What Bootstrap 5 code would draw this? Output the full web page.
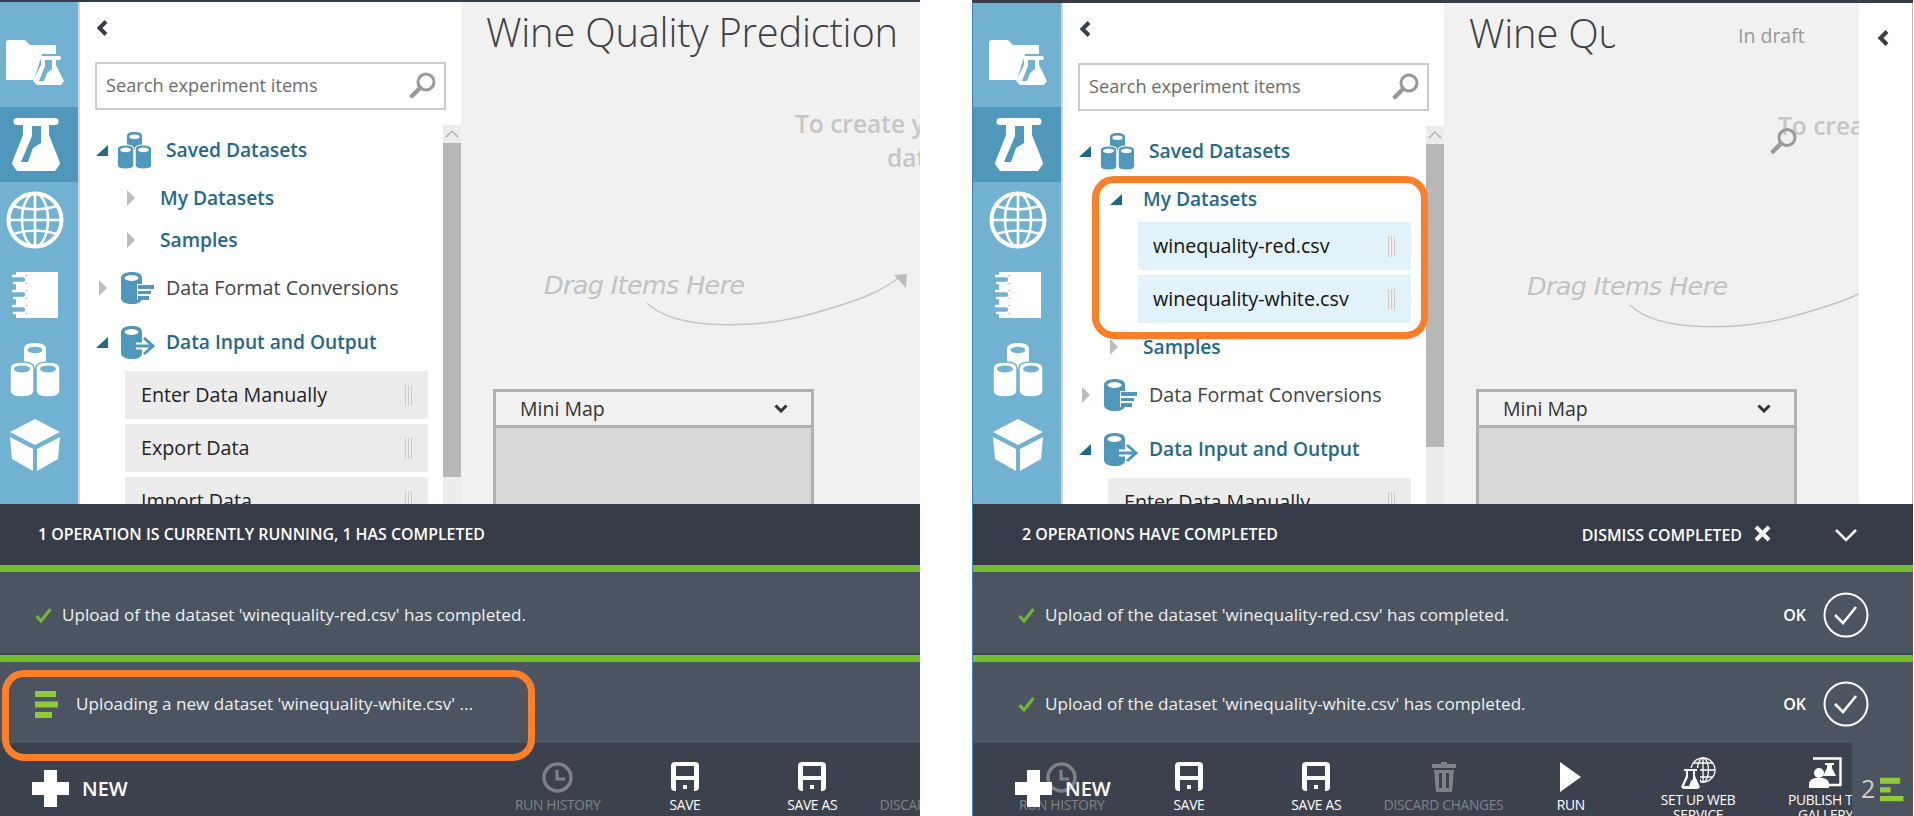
<!DOCTYPE html>
<html lang="en">
<head>
<meta charset="utf-8">
<title>Wine Quality Prediction</title>
<link rel="stylesheet" href="https://cdn.jsdelivr.net/npm/bootstrap@5.3.0/dist/css/bootstrap.min.css">
<style>
html,body{height:816px;overflow:hidden}
body{background:#fff;font-family:"Open Sans","Noto Sans",sans-serif;color:#222;width:1914px}
.ui-pane{height:816px;position:relative;overflow:hidden;flex:none;background:#fff}
.pane-a{width:930px;margin-left:-10px;border-top:2px solid #373d48}
.pane-b{width:941px;margin-left:52px;border-top:3px solid #373d48;border-left:1px solid #3f88c5}
.work{flex:1 1 0;min-height:0;overflow:hidden}
.rail{width:90px;flex:none;background:#71b1d1;border-right:2px solid #cdd6db;color:#fff;--hole:#71b1d1;overflow:hidden}
.rail-item{height:75px;flex:none;padding-left:2px}
.rail-first{height:105px;padding-bottom:22px}
.pane-b .rail-first{height:104px}
.rail-item.is-on{background:#5098bb;--hole:#5098bb;margin-right:-2px;position:relative}
.palette{width:381px;flex:none;padding:0 0 0 15px;background:#fff;overflow:hidden}
.back{height:60px;flex:none;padding:0 0 8px 1px}
.searchbox{width:351px;height:48px;border:2px solid #ccc;flex:none;position:relative}
.searchbox .form-control{border:0;border-radius:0;height:44px;padding:0 40px 2px 9px;font-size:18.2px;color:#666;background:transparent;box-shadow:none}
.searchbox .form-control::placeholder{color:#6d6d6d;opacity:1}
.searchbox svg{position:absolute;right:8px;top:8px}
.treewrap{margin-top:13px;flex:1 1 0;min-height:0;overflow:hidden}
.tree{width:333px;flex:none;--hole:#fff;color:#4f97bc}
.row-top{height:54px;flex:none}
.row-sub{height:42px;flex:none;padding-left:32px}
.col-tw{width:22px;flex:none;padding-left:1px}
.row-sub .col-tw{width:33px;padding-left:0}
.col-ic{width:49px;flex:none}
.t-node{font-size:19.7px;color:#444;white-space:nowrap}
.t-open{color:#1d6a8e;font-weight:600;font-size:19.2px}
.items{margin:2px 0 0 30px;width:303px;gap:5px;border-radius:0;flex:none}
.items.nested{margin-left:60px;width:273px}
.items .list-group-item{height:48px;flex:none;border:0;border-radius:0;background:#ececec;color:#222;font-size:19.7px;padding:0 15px 0 16px;margin:0;white-space:nowrap}
.items.nested .list-group-item{background:#e1f2fa;padding-left:15px;color:#111}
.after-nest{margin-top:3px}
.grip{width:8px;height:21px;flex:none;background:repeating-linear-gradient(90deg,#ccc 0 1px,#eee 1px 3px)}
.scrolly{width:18px;flex:none;margin-top:2px;background:#ececec}
.scrolly svg{display:block;margin:5px auto 0}
.sc-btn{height:18px;flex:none}
.thumb{background:#b7b7b7;flex:none}
.thumb-a{height:334px}
.thumb-b{height:303px}
.stage{flex:1 1 0;min-width:0;background:#f1f1f1;position:relative;overflow:hidden}
.wtitle{font-size:39.8px;font-weight:300;color:#3d3f44;white-space:nowrap;line-height:1;margin:10px 0 0 25px;letter-spacing:-.2px}
.wtitle-cut{width:146px;overflow:hidden;padding-bottom:6px}
.draft{position:absolute;left:294px;top:18px;font-size:19.5px;color:#999;white-space:nowrap}
.hint{position:absolute;left:334px;top:105px;font-size:24.5px;line-height:34px;font-weight:600;color:#c6c6c6;white-space:nowrap}
.hint span{display:block}
.hint span+span{margin-left:92px}
.pane-b .hint{top:106px}
.dragit{position:absolute;left:83px;top:266px;font-family:"DejaVu Sans",sans-serif;font-style:italic;font-size:24px;font-weight:300;color:#c2c2c2;white-space:nowrap;letter-spacing:-.6px;transform:scaleX(1.06);transform-origin:left}
.pane-b .dragit{top:266px}
.swoosh{position:absolute;left:0;top:0}
.pane-b .swoosh{top:1px}
.minimap{position:absolute;left:32px;top:387px;bottom:-10px;width:321px;border:3px solid #b0b0b0}
.pane-b .minimap{top:386px}
.mm-head{height:33px;flex:none;border-bottom:3px solid #b0b0b0;padding:0 23px 0 24px;font-size:19.5px;color:#333;box-sizing:content-box}
.mm-body{flex:1;background:#d8d8d8}
.finder{position:absolute;left:326px;top:124px}
.sideback{width:54px;flex:none;background:#fff;padding:21px 0 0 18px;border-right:1px solid #bbb}
.tray{height:312px;flex:none;background:#363c47;color:#fff;position:relative}
.tray-head{height:61px;padding:0 55px 0 49px;font-size:15.9px;font-weight:600;white-space:nowrap;flex:none}
.pane-a .tray-head{padding-left:48px}
.dismiss{margin-left:auto;font-size:15.9px;font-weight:600;margin-top:2px;color:#fff}
.dismiss svg{margin:-4px 63px 0 12px}
.op{height:90px;flex:none;border-top:7px solid #73bd2e;background:#4a5561;box-shadow:inset 0 -2px 0 #3c4550;padding:3px 44px 0 45px;font-size:17.1px;color:#eef0f2;white-space:nowrap}
.op + .op{box-shadow:none;height:88px}
.op .ic{flex:none;width:27px}
.op .ic-run{width:41px}
.okpart{margin-left:auto;color:#fff;font-weight:600;font-size:16px;gap:17px}
.tools{height:73px;flex:none;background:#3c424d;position:relative;overflow:hidden}
.tool-row{flex:1 1 0;min-width:0;overflow:hidden;padding-left:504px}
.pane-b .tool-row{padding-left:25px}
.tool{width:127.3px;flex:none;padding:14px 0 0;text-align:center;font-size:13.8px;line-height:15px;color:#fff;border:0;border-radius:0;letter-spacing:-.3px}
.tool.btn:disabled,.tool.is-off{color:#7d8289;opacity:1}
.tool .glyph{height:31px;margin-bottom:4px}
.tool span{display:block;white-space:nowrap}
.addnew{position:absolute;left:42px;top:27px;gap:13px;font-size:20px;font-weight:600;color:#fff;line-height:1;padding:0;border:0}
.bell{width:61px;flex:none;background:#4a5561;padding:33px 9px 0 9px;color:#ccc;font-size:25px;line-height:1;gap:5px}
.callout{position:absolute;border:7px solid #ff7f27;border-radius:22px;pointer-events:none}
.callout-run{left:12px;top:668px;width:533px;height:91px}
.callout-tree{left:119px;top:173px;width:336px;height:163px}
.defs{position:absolute;width:0;height:0}
</style>
</head>
<body class="d-flex">
<svg class="defs" aria-hidden="true">
  <symbol id="i-flask" viewBox="0 0 48 53"><path fill="currentColor" fill-rule="evenodd" d="M5 0H43a3.500 3.500 0 0 1 0 7H37V17L47 42L48 46L43 53H5L0 46L1 42L11 17V7H5a3.500 3.500 0 0 1 0-7ZM20 8V18L9 44H16L21 30L29 25V8Z"/></symbol>
  <symbol id="i-folder" viewBox="0 0 58 45"><path fill="currentColor" d="M0 3Q0 0 3 0H19L24 5H50V14H36L28 40H0Z"/><path fill="currentColor" fill-rule="evenodd" d="M36 16H53a2 2 0 0 1 0 4H50V25L58 41L55 45H31L27 41L35 25V20H36a2 2 0 0 1 0-4ZM39 20V26L33 41H38L41 33L46 29V20Z"/></symbol>
  <symbol id="i-globe" viewBox="0 0 58 58"><g fill="none" stroke="currentColor"><circle cx="29" cy="29" r="26.500" stroke-width="4"/><ellipse cx="29" cy="29" rx="13" ry="26.500" stroke-width="2.600"/><path stroke-width="2.600" d="M29 3V55M3 29H55M7 15Q29 22 51 15M7 43Q29 36 51 43"/></g></symbol>
  <symbol id="i-book" viewBox="0 0 46 46"><path fill="currentColor" d="M4 0H46V46H4Z"/><path fill="var(--hole)" d="M0 3H15V12H0ZM0 18H15V27H0ZM0 33H15V42H0Z"/><path fill="none" stroke="currentColor" stroke-width="2.600" stroke-linecap="round" d="M1 4H11Q14.500 4 14.500 7.500T11 11H2M1 19H11Q14.500 19 14.500 22.500T11 26H2M1 34H11Q14.500 34 14.500 37.500T11 41H2"/></symbol>
  <symbol id="i-stack" viewBox="0 0 50 54"><path fill="currentColor" d="M13 0C20 0 24 2 24 6V20C24 24 20 26 13 26S2 24 2 20V6C2 2 6 0 13 0Z" transform="translate(12 0)"/><ellipse fill="var(--hole)" cx="25" cy="7" rx="7.500" ry="3.200"/><path fill="currentColor" stroke="var(--hole)" stroke-width="1.500" d="M12 19C19 19 24 21 24 25V48C24 52 19 54 12 54S0 52 0 48V25C0 21 5 19 12 19Z"/><ellipse fill="var(--hole)" cx="12" cy="26" rx="8" ry="3.400"/><path fill="currentColor" stroke="var(--hole)" stroke-width="1.500" d="M38 19C45 19 50 21 50 25V48C50 52 45 54 38 54S26 52 26 48V25C26 21 31 19 38 19Z"/><ellipse fill="var(--hole)" cx="38" cy="26" rx="8" ry="3.400"/></symbol>
  <symbol id="i-cube" viewBox="0 0 50 52"><path fill="currentColor" d="M25 0L50 13L25 26L0 13ZM0 18L23 30V52L2 40ZM50 18L27 30V52L48 40Z"/></symbol>
  <symbol id="i-puzzle" viewBox="0 0 25 10"><path fill="currentColor" d="M0 10V5H2Q2 1 6 1T9 5H14Q14 0 19 0T24 5H25V10Z"/></symbol>
  <symbol id="i-can-fmt" viewBox="0 0 33 32"><path fill="currentColor" d="M11 0C17 0 21 2 21 6V26C21 30 17 32 11 32S0 30 0 26V6C0 2 5 0 11 0Z"/><ellipse fill="#fff" cx="10.500" cy="6" rx="7" ry="3"/><path fill="#fff" d="M16 12H33V28H16Z"/><path fill="currentColor" d="M17 13H33V17H17ZM17 19H30V22H17ZM17 24H28V28H17Z"/></symbol>
  <symbol id="i-can-io" viewBox="0 0 35 33"><path fill="currentColor" d="M11 0C17 0 21 2 21 6V27C21 31 17 33 11 33S0 31 0 27V6C0 2 5 0 11 0Z"/><ellipse fill="#fff" cx="10.500" cy="6" rx="7" ry="3"/><path fill="none" stroke="#fff" stroke-width="7" d="M15 20H30M23 12L32 20L23 28"/><path fill="none" stroke="currentColor" stroke-width="3" d="M15 20H31M23 12L32 20L23 28"/></symbol>
  <symbol id="i-mag" viewBox="0 0 27 27"><g fill="none" stroke="currentColor"><circle cx="17" cy="10" r="8" stroke-width="3"/><path stroke-width="4.500" stroke-linecap="round" d="M11 16L3 24"/></g></symbol>
  <symbol id="i-save" viewBox="0 0 28 29"><path fill="currentColor" fill-rule="evenodd" d="M4 0H24Q28 0 28 4V25Q28 29 24 29H4Q0 29 0 25V4Q0 0 4 0ZM5 4V14H23V4ZM5 18V29H23V18Z"/><path fill="currentColor" d="M12 23H16V27H12Z"/></symbol>
  <symbol id="i-clock" viewBox="0 0 31 31"><g fill="none" stroke="currentColor"><circle cx="15.500" cy="15.500" r="13.500" stroke-width="3.400"/><path stroke-width="3" d="M15 8V17H23"/></g></symbol>
  <symbol id="i-trash" viewBox="0 0 24 30"><path fill="currentColor" fill-rule="evenodd" d="M9 0H15V2H24V6H0V2H9ZM2 8H22L20 30H4ZM7 11V26H10V11ZM14 11V26H17V11Z"/></symbol>
  <symbol id="i-run" viewBox="0 0 21 30"><path fill="currentColor" d="M0 0L21 15L0 30Z"/></symbol>
  <symbol id="i-web" viewBox="0 0 36 32"><g fill="none" stroke="currentColor" stroke-width="1.300"><circle cx="23" cy="13" r="12"/><ellipse cx="23" cy="13" rx="5.500" ry="12"/><path d="M23 1V25M11 13H35M13 6H33M13 20H33"/></g><path fill="#3c424d" d="M0 11H20V32H0Z"/><path fill="currentColor" fill-rule="evenodd" d="M4 12H17V14H15V19L20 30L18 32H3L1 30L6 19V14H4ZM8 14V20L4 29H9L11 24L13 22V14Z"/></symbol>
  <symbol id="i-pub" viewBox="0 0 33 31"><path fill="none" stroke="currentColor" stroke-width="2.400" d="M4 1.500H31.500V28H20"/><path fill="currentColor" d="M16 6H25V8H23V11L27 19H14L18 11V8H16Z"/><circle cx="10" cy="16" r="5" fill="currentColor"/><path fill="currentColor" d="M0 31V26Q1 22 6 21H14Q19 22 20 26V31Z"/></symbol>
  <symbol id="i-plus" viewBox="0 0 37 37"><path fill="currentColor" d="M12 0H25V12H37V25H25V37H12V25H0V12H12Z"/></symbol>
  <symbol id="i-tick" viewBox="0 0 17 15"><path fill="none" stroke="#70b82f" stroke-width="3.200" d="M1.500 8L6 13L15.500 1"/></symbol>
  <symbol id="i-busy" viewBox="0 0 23 27"><path fill="#8fcb38" d="M0 0H21V6H0ZM0 10.500H23V16.500H0ZM0 21H17V27H0Z"/></symbol>
  <symbol id="i-bell" viewBox="0 0 27 27"><path fill="#8fcb38" d="M0 0H23V7H0ZM0 11H12V17H0ZM0 21H27V27H0Z"/></symbol>
  <symbol id="i-okc" viewBox="0 0 46 46"><circle cx="23" cy="23" r="21.500" fill="none" stroke="#fff" stroke-width="2"/><path fill="none" stroke="#fff" stroke-width="2.600" d="M12 23L20 31L33 15"/></symbol>
  <symbol id="i-open" viewBox="0 0 12 11"><path fill="#1d6a8e" d="M12 0V11H0Z"/></symbol>
  <symbol id="i-shut" viewBox="0 0 8 16"><path fill="#bdbdbd" d="M0 0L8 8L0 16Z"/></symbol>
  <symbol id="i-back" viewBox="0 0 12 16"><path fill="none" stroke="#3a3f47" stroke-width="4" d="M10 1.500L3.500 8L10 14.500"/></symbol>
  <symbol id="i-down" viewBox="0 0 14 9"><path fill="none" stroke="#333" stroke-width="3" d="M1.500 1.500L7 7L12.500 1.500"/></symbol>
  <symbol id="i-up" viewBox="0 0 14 8"><path fill="none" stroke="#aaa" stroke-width="1.200" d="M1 7L7 1L13 7"/></symbol>
  <symbol id="i-swoosh" viewBox="0 0 459 330"><path fill="none" stroke="#c5c5c5" stroke-width="1.500" d="M186 301C215 330 300 326 350 312S420 290 440 274"/><path fill="#bdbdbd" d="M433 273L446 272L445 286Z"/></symbol>
</svg>

<!-- LEFT SCREEN -->
<div class="ui-pane pane-a d-flex flex-column">
  <div class="work d-flex">
    <nav class="rail d-flex flex-column">
      <div class="rail-item rail-first d-flex justify-content-center align-items-end"><svg width="58" height="45"><use href="#i-folder"/></svg></div>
      <div class="rail-item is-on d-flex justify-content-center align-items-center"><svg width="48" height="53"><use href="#i-flask"/></svg></div>
      <div class="rail-item d-flex justify-content-center align-items-center"><svg width="58" height="58"><use href="#i-globe"/></svg></div>
      <div class="rail-item d-flex justify-content-center align-items-center"><svg width="46" height="46"><use href="#i-book"/></svg></div>
      <div class="rail-item d-flex justify-content-center align-items-center"><svg width="50" height="54"><use href="#i-stack"/></svg></div>
      <div class="rail-item d-flex justify-content-center align-items-center"><svg width="50" height="52"><use href="#i-cube"/></svg></div>
      <div class="rail-item d-flex justify-content-center align-items-center"><svg width="25" height="10"><use href="#i-puzzle"/></svg></div>
    </nav>
    <aside class="palette d-flex flex-column">
      <div class="back d-flex align-items-center"><svg width="12" height="16"><use href="#i-back"/></svg></div>
      <div class="searchbox"><input class="form-control" placeholder="Search experiment items"><svg width="27" height="27" style="color:#999"><use href="#i-mag"/></svg></div>
      <div class="treewrap d-flex">
        <div class="tree d-flex flex-column">
          <div class="row-top d-flex align-items-center"><span class="col-tw d-flex"><svg width="12" height="11"><use href="#i-open"/></svg></span><span class="col-ic d-flex"><svg width="35" height="37"><use href="#i-stack"/></svg></span><span class="t-node t-open">Saved Datasets</span></div>
          <div class="row-sub d-flex align-items-center"><span class="col-tw d-flex"><svg width="8" height="16"><use href="#i-shut"/></svg></span><span class="t-node t-open">My Datasets</span></div>
          <div class="row-sub d-flex align-items-center"><span class="col-tw d-flex"><svg width="8" height="16"><use href="#i-shut"/></svg></span><span class="t-node t-open">Samples</span></div>
          <div class="row-top d-flex align-items-center"><span class="col-tw d-flex ps-1"><svg width="8" height="16"><use href="#i-shut"/></svg></span><span class="col-ic d-flex ps-1"><svg width="33" height="32"><use href="#i-can-fmt"/></svg></span><span class="t-node">Data Format Conversions</span></div>
          <div class="row-top d-flex align-items-center"><span class="col-tw d-flex"><svg width="12" height="11"><use href="#i-open"/></svg></span><span class="col-ic d-flex ps-1"><svg width="35" height="33"><use href="#i-can-io"/></svg></span><span class="t-node t-open">Data Input and Output</span></div>
          <ul class="items list-group flex-column">
            <li class="list-group-item d-flex align-items-center justify-content-between">Enter Data Manually<span class="grip"></span></li>
            <li class="list-group-item d-flex align-items-center justify-content-between">Export Data<span class="grip"></span></li>
            <li class="list-group-item d-flex align-items-center justify-content-between">Import Data<span class="grip"></span></li>
          </ul>
        </div>
        <div class="scrolly d-flex flex-column ms-auto"><div class="sc-btn"><svg width="14" height="8"><use href="#i-up"/></svg></div><div class="thumb thumb-a"></div></div>
      </div>
    </aside>
    <main class="stage">
      <h1 class="wtitle">Wine Quality Prediction</h1>
      <div class="hint"><span>To create your experiment</span><span>datasets</span></div>
      <svg class="swoosh" width="459" height="330"><use href="#i-swoosh"/></svg>
      <div class="dragit">Drag Items Here</div>
      <div class="minimap d-flex flex-column"><div class="mm-head d-flex align-items-center justify-content-between">Mini Map<svg width="14" height="9"><use href="#i-down"/></svg></div><div class="mm-body"></div></div>
    </main>
  </div>
  <section class="tray d-flex flex-column">
    <div class="tray-head d-flex align-items-center">1 OPERATION IS CURRENTLY RUNNING, 1 HAS COMPLETED</div>
    <div class="op d-flex align-items-center"><span class="ic d-flex"><svg width="17" height="15"><use href="#i-tick"/></svg></span>Upload of the dataset 'winequality-red.csv' has completed.</div>
    <div class="op d-flex align-items-center"><span class="ic ic-run d-flex"><svg width="23" height="27"><use href="#i-busy"/></svg></span>Uploading a new dataset 'winequality-white.csv' ...</div>
    <div class="tools d-flex">
      <div class="tool-row d-flex">
        <button class="tool btn is-off" disabled><div class="glyph"><svg width="31" height="31"><use href="#i-clock"/></svg></div><span>RUN HISTORY</span></button>
        <button class="tool btn"><div class="glyph"><svg width="28" height="29"><use href="#i-save"/></svg></div><span>SAVE</span></button>
        <button class="tool btn"><div class="glyph"><svg width="28" height="29"><use href="#i-save"/></svg></div><span>SAVE AS</span></button>
        <button class="tool btn is-off" disabled><div class="glyph"><svg width="24" height="30"><use href="#i-trash"/></svg></div><span>DISCARD CHANGES</span></button>
      </div>
      <button class="addnew btn d-flex align-items-center"><svg width="37" height="37"><use href="#i-plus"/></svg>NEW</button>
    </div>
  </section>
  <div class="callout callout-run"></div>
</div>

<!-- RIGHT SCREEN -->
<div class="ui-pane pane-b d-flex flex-column">
  <div class="work d-flex">
    <nav class="rail d-flex flex-column">
      <div class="rail-item rail-first d-flex justify-content-center align-items-end"><svg width="58" height="45"><use href="#i-folder"/></svg></div>
      <div class="rail-item is-on d-flex justify-content-center align-items-center"><svg width="48" height="53"><use href="#i-flask"/></svg></div>
      <div class="rail-item d-flex justify-content-center align-items-center"><svg width="58" height="58"><use href="#i-globe"/></svg></div>
      <div class="rail-item d-flex justify-content-center align-items-center"><svg width="46" height="46"><use href="#i-book"/></svg></div>
      <div class="rail-item d-flex justify-content-center align-items-center"><svg width="50" height="54"><use href="#i-stack"/></svg></div>
      <div class="rail-item d-flex justify-content-center align-items-center"><svg width="50" height="52"><use href="#i-cube"/></svg></div>
      <div class="rail-item d-flex justify-content-center align-items-center"><svg width="25" height="10"><use href="#i-puzzle"/></svg></div>
    </nav>
    <aside class="palette d-flex flex-column">
      <div class="back d-flex align-items-center"><svg width="12" height="16"><use href="#i-back"/></svg></div>
      <div class="searchbox"><input class="form-control" placeholder="Search experiment items"><svg width="27" height="27" style="color:#999"><use href="#i-mag"/></svg></div>
      <div class="treewrap d-flex">
        <div class="tree d-flex flex-column">
          <div class="row-top d-flex align-items-center"><span class="col-tw d-flex"><svg width="12" height="11"><use href="#i-open"/></svg></span><span class="col-ic d-flex"><svg width="35" height="37"><use href="#i-stack"/></svg></span><span class="t-node t-open">Saved Datasets</span></div>
          <div class="row-sub d-flex align-items-center"><span class="col-tw d-flex"><svg width="12" height="11"><use href="#i-open"/></svg></span><span class="t-node t-open">My Datasets</span></div>
          <ul class="items nested list-group flex-column">
            <li class="list-group-item d-flex align-items-center justify-content-between">winequality-red.csv<span class="grip"></span></li>
            <li class="list-group-item d-flex align-items-center justify-content-between">winequality-white.csv<span class="grip"></span></li>
          </ul>
          <div class="row-sub after-nest d-flex align-items-center"><span class="col-tw d-flex"><svg width="8" height="16"><use href="#i-shut"/></svg></span><span class="t-node t-open">Samples</span></div>
          <div class="row-top d-flex align-items-center"><span class="col-tw d-flex ps-1"><svg width="8" height="16"><use href="#i-shut"/></svg></span><span class="col-ic d-flex ps-1"><svg width="33" height="32"><use href="#i-can-fmt"/></svg></span><span class="t-node">Data Format Conversions</span></div>
          <div class="row-top d-flex align-items-center"><span class="col-tw d-flex"><svg width="12" height="11"><use href="#i-open"/></svg></span><span class="col-ic d-flex ps-1"><svg width="35" height="33"><use href="#i-can-io"/></svg></span><span class="t-node t-open">Data Input and Output</span></div>
          <ul class="items list-group flex-column">
            <li class="list-group-item d-flex align-items-center justify-content-between">Enter Data Manually<span class="grip"></span></li>
          </ul>
        </div>
        <div class="scrolly d-flex flex-column ms-auto"><div class="sc-btn"><svg width="14" height="8"><use href="#i-up"/></svg></div><div class="thumb thumb-b"></div></div>
      </div>
    </aside>
    <main class="stage">
      <h1 class="wtitle wtitle-cut">Wine Quality Prediction</h1>
      <div class="draft">In draft</div>
      <div class="hint"><span>To create your experiment</span><span>datasets</span></div>
      <svg class="finder" width="27" height="28" style="color:#999"><use href="#i-mag"/></svg>
      <svg class="swoosh" width="459" height="330"><use href="#i-swoosh"/></svg>
      <div class="dragit">Drag Items Here</div>
      <div class="minimap d-flex flex-column"><div class="mm-head d-flex align-items-center justify-content-between">Mini Map<svg width="14" height="9"><use href="#i-down"/></svg></div><div class="mm-body"></div></div>
    </main>
    <div class="sideback"><svg width="12" height="16"><use href="#i-back"/></svg></div>
  </div>
  <section class="tray d-flex flex-column">
    <div class="tray-head d-flex align-items-center">2 OPERATIONS HAVE COMPLETED
      <span class="dismiss d-flex align-items-center">DISMISS COMPLETED<svg width="17" height="17" viewBox="0 0 17 17"><path fill="none" stroke="#fff" stroke-width="4" d="M2 2L15 15M15 2L2 15"/></svg></span>
      <svg width="24" height="14" viewBox="0 0 24 14"><path fill="none" stroke="#fff" stroke-width="2.500" d="M2 2L12 12L22 2"/></svg>
    </div>
    <div class="op d-flex align-items-center"><span class="ic d-flex"><svg width="17" height="15"><use href="#i-tick"/></svg></span>Upload of the dataset 'winequality-red.csv' has completed.<span class="okpart d-flex align-items-center">OK<svg width="46" height="46"><use href="#i-okc"/></svg></span></div>
    <div class="op d-flex align-items-center"><span class="ic d-flex"><svg width="17" height="15"><use href="#i-tick"/></svg></span>Upload of the dataset 'winequality-white.csv' has completed.<span class="okpart d-flex align-items-center">OK<svg width="46" height="46"><use href="#i-okc"/></svg></span></div>
    <div class="tools d-flex">
      <div class="tool-row d-flex">
        <button class="tool btn is-off" disabled><div class="glyph"><svg width="31" height="31"><use href="#i-clock"/></svg></div><span>RUN HISTORY</span></button>
        <button class="tool btn"><div class="glyph"><svg width="28" height="29"><use href="#i-save"/></svg></div><span>SAVE</span></button>
        <button class="tool btn"><div class="glyph"><svg width="28" height="29"><use href="#i-save"/></svg></div><span>SAVE AS</span></button>
        <button class="tool btn is-off" disabled><div class="glyph"><svg width="24" height="30"><use href="#i-trash"/></svg></div><span>DISCARD CHANGES</span></button>
        <button class="tool btn"><div class="glyph"><svg width="21" height="30"><use href="#i-run"/></svg></div><span>RUN</span></button>
        <button class="tool btn"><div class="glyph"><svg width="36" height="32"><use href="#i-web"/></svg></div><span>SET UP WEB</span><span>SERVICE</span></button>
        <button class="tool btn"><div class="glyph"><svg width="33" height="31"><use href="#i-pub"/></svg></div><span>PUBLISH TO</span><span>GALLERY</span></button>
      </div>
      <div class="bell d-flex">2<svg width="27" height="27"><use href="#i-bell"/></svg></div>
      <button class="addnew btn d-flex align-items-center"><svg width="37" height="37"><use href="#i-plus"/></svg>NEW</button>
    </div>
  </section>
  <div class="callout callout-tree"></div>
</div>
<script src="https://cdn.jsdelivr.net/npm/bootstrap@5.3.0/dist/js/bootstrap.bundle.min.js"></script>
</body>
</html>
